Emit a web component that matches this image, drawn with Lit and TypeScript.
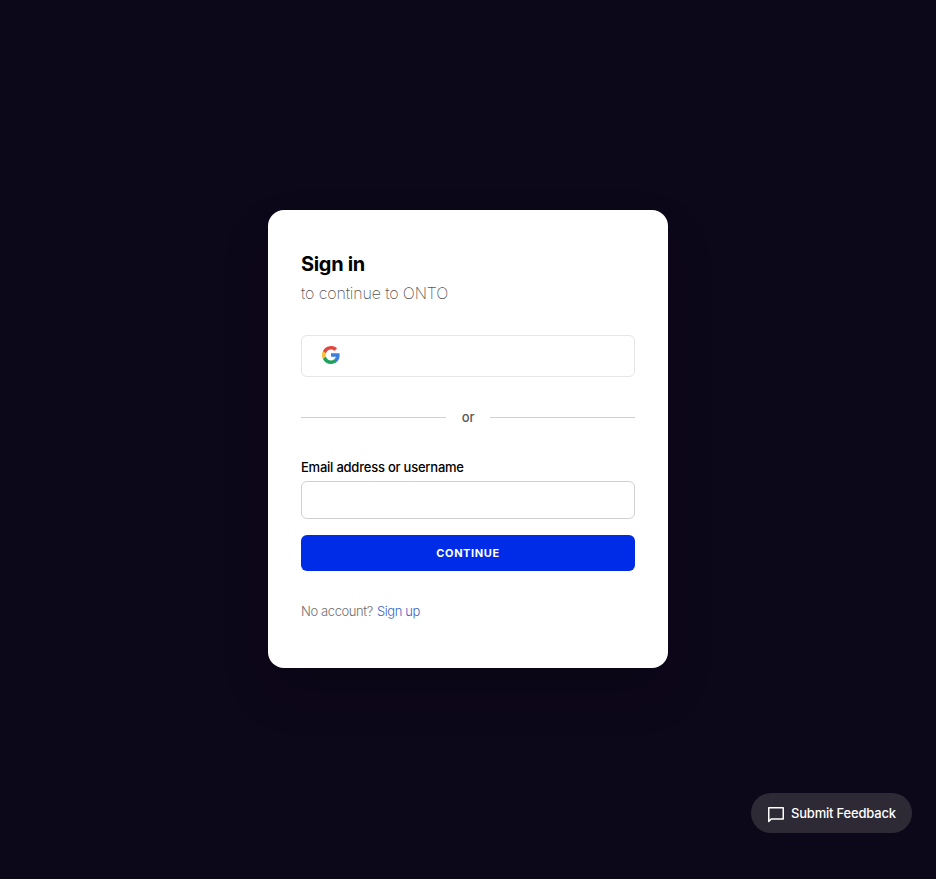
import { LitElement, html, css } from "lit";
import { customElement } from "lit/decorators.js";

@customElement("app-root")
export class AppRoot extends LitElement {
  static styles = css`
    :host { display: flex; align-items: center; justify-content: center; height: 879px; background: #0d071a; font-family: Inter, "Liberation Sans", sans-serif; color: #000; }
    * { box-sizing: border-box; }
    .card { width: 400px; height: 458px; margin-bottom: 1px; padding: 40px 33px 0; border-radius: 16px; background: #fff; box-shadow: 0 24px 48px rgba(0, 0, 0, 0.16); display: flex; flex-direction: column; }
    .card > * { flex: none; }
    h1 { margin: 0; font-size: 20px; line-height: 28px; font-weight: 700; letter-spacing: -0.34px; }
    .sub { font-size: 16px; line-height: 26px; margin-top: 2px; font-weight: 200; letter-spacing: -0.15px; color: rgba(0, 0, 0, 0.7); }
    h1 span, .sub span, label span, .or span, .foot span, .foot a, .cta span, .feedback span { display: inline-block; white-space: nowrap; }
    .google { height: 42px; margin-top: 29px; border: 1px solid #e6e6e6; border-radius: 6px; background: #fff; padding: 0 20px 2px; display: flex; align-items: center; }
    .or { display: flex; align-items: center; gap: 16px; height: 20px; margin-top: 30px; font-size: 13px; font-weight: 500; letter-spacing: -0.1px; color: #595959; }
    .or::before, .or::after { content: ""; flex: 1; height: 1px; background: #d0d0d0; }
    label { margin-top: 30px; font-size: 13px; line-height: 20px; font-weight: 500; letter-spacing: -0.23px; }
    input { height: 38px; margin-top: 4px; border: 1px solid #d0d0d0; border-radius: 6px; outline: none; background: #fff; }
    .cta { height: 36px; margin-top: 16px; border: 0; border-radius: 6px; background: #002ce8; color: #fff; font: 700 11px Inter, sans-serif; letter-spacing: 0.6px; }
    .foot { margin-top: 30px; font-size: 13px; line-height: 20px; font-weight: 300; letter-spacing: -0.4px; color: #707070; display: flex; gap: 4px; }
    .foot a { color: #3f5fc4; }
    .feedback { position: fixed; right: 24px; bottom: 46px; width: 161px; height: 40px; border: 0; border-radius: 20px; background: #2d2935; color: #fff; display: flex; align-items: center; gap: 7px; padding: 0 16px 0 17px; font: 500 13px Inter, sans-serif; letter-spacing: -0.2px; }
    svg { display: block; flex: none; }
    .feedback svg { margin-top: 3px; }
  `;
  render() {
    return html`
      <main class="card">
        <h1><span>Sign in</span></h1>
        <div class="sub"><span>to continue to ONTO</span></div>
        <button class="google" aria-label="Google">
          <svg width="18" height="18" viewBox="0 0 18 18"><path fill="#3c80dc" d="M17.64 9.2c0-.64-.06-1.25-.16-1.84H9v3.49h4.84a4.14 4.14 0 0 1-1.8 2.71v2.26h2.92c1.7-1.57 2.68-3.88 2.68-6.62z"/><path fill="#219f5c" d="M9 18c2.43 0 4.47-.8 5.96-2.18l-2.92-2.26c-.8.54-1.84.86-3.04.86-2.34 0-4.33-1.58-5.04-3.71H.96v2.33A9 9 0 0 0 9 18z"/><path fill="#f8c03c" d="M3.96 10.71a5.4 5.4 0 0 1 0-3.42V4.96H.96a9 9 0 0 0 0 8.08z"/><path fill="#e2473f" d="M9 3.58c1.32 0 2.51.45 3.44 1.35l2.58-2.59A9 9 0 0 0 .96 4.96l3 2.33C4.67 5.16 6.66 3.58 9 3.58z"/></svg>
        </button>
        <div class="or"><span>or</span></div>
        <label for="identifier"><span>Email address or username</span></label>
        <input id="identifier" type="text" />
        <button class="cta"><span>CONTINUE</span></button>
        <div class="foot"><span>No account?</span><a>Sign up</a></div>
      </main>
      <button class="feedback">
        <svg width="16" height="16" viewBox="0 0 16 16" fill="none" stroke="#fff" stroke-width="1.5" stroke-linejoin="round"><path d="M.75 .75H15.25V12H3.2L.75 14.4Z"/></svg>
        <span>Submit Feedback</span>
      </button>`;
  }
}
